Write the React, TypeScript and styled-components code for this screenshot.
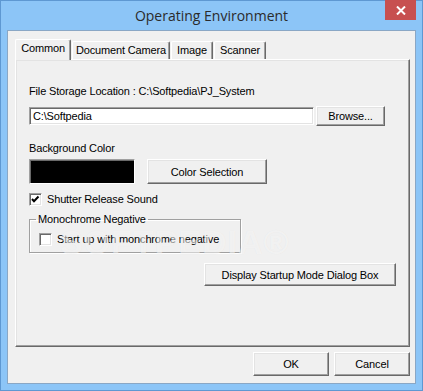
import styled, { createGlobalStyle } from "styled-components"

const Global = createGlobalStyle`
    html, body {
        margin: 0;
        padding: 0;
        background: #8cc5f7;
    }
    * { box-sizing: border-box; }
`

const Window = styled.div`
    width: 423px;
    height: 391px;
    display: flex;
    flex-direction: column;
    background: #8cc5f7;
    border: 1px solid #5e98d2;
    font-family: "Liberation Sans", Arial, sans-serif;
    font-size: 11px;
    letter-spacing: -0.15px;
    color: #000;
`

const TitleBar = styled.div`
    height: 29px;
    display: flex;
    align-items: flex-start;
    flex-shrink: 0;
`

const Title = styled.div`
    flex: 1;
    padding-left: 37px;
    text-align: center;
    font-family: "Open Sans", "Noto Sans", sans-serif;
    font-size: 14px;
    letter-spacing: 0;
    line-height: 29px;
    color: #2b2b2b;
`

const CloseButton = styled.div`
    width: 31px;
    height: 20px;
    margin-top: -1px;
    margin-right: 6px;
    background: #c75050;
    display: flex;
    align-items: center;
    justify-content: center;
`

const Client = styled.div`
    flex: 1;
    margin: 0 6px 6px 6px;
    border: 1px solid #8aa7c5;
    background: #f0f0f0;
    padding: 8px 5px 6px 6px;
    display: flex;
    flex-direction: column;
`

const TabStrip = styled.div`
    height: 20px;
    display: flex;
    align-items: flex-end;
    padding-left: 1px;
    position: relative;
    z-index: 1;
`

const Tab = styled.div<{ $w: number; $active?: boolean }>`
    width: ${p => p.$w}px;
    height: ${p => (p.$active ? 21 : 18)}px;
    margin-bottom: ${p => (p.$active ? -1 : 0)}px;
    margin-right: 1px;
    background: #f0f0f0;
    border-top: 1px solid #fff;
    border-left: 1px solid #fff;
    border-right: 1px solid #696969;
    border-radius: 2px 2px 0 0;
    box-shadow: inset -1px 0 0 #a0a0a0;
    text-align: center;
    line-height: ${p => (p.$active ? 16 : 17)}px;
    white-space: nowrap;
`

const Panel = styled.div`
    position: relative;
    height: 288px;
    margin-left: 1px;
    border-top: 1px solid #fff;
    border-left: 1px solid #fff;
    border-right: 1px solid #696969;
    border-bottom: 1px solid #696969;
    box-shadow: inset -1px -1px 0 #a0a0a0, inset 1px 1px 0 #e3e3e3;
    padding: 25px 13px 0 13px;
    display: flex;
    flex-direction: column;
`

const Label = styled.div<{ $mt?: number }>`
    line-height: 13px;
    margin-top: ${p => p.$mt ?? 0}px;
    white-space: nowrap;
`

const Row = styled.div<{ $mt: number; $gap: number }>`
    display: flex;
    align-items: center;
    margin-top: ${p => p.$mt}px;
    gap: ${p => p.$gap}px;
`

const TextBox = styled.div`
    width: 285px;
    height: 18px;
    background: #fff;
    border-top: 1px solid #a0a0a0;
    border-left: 1px solid #a0a0a0;
    border-right: 1px solid #fff;
    border-bottom: 1px solid #fff;
    box-shadow: inset 1px 1px 0 #696969, inset -1px -1px 0 #e3e3e3;
    padding: 0 3px;
    line-height: 16px;
`

const Button = styled.div<{ $w: number; $h: number }>`
    width: ${p => p.$w}px;
    height: ${p => p.$h}px;
    background: #f0f0f0;
    border-top: 1px solid #fff;
    border-left: 1px solid #fff;
    border-right: 1px solid #696969;
    border-bottom: 1px solid #696969;
    box-shadow: inset -1px -1px 0 #a0a0a0, inset 1px 1px 0 #e3e3e3;
    display: flex;
    align-items: center;
    justify-content: center;
    white-space: nowrap;
`

const Swatch = styled.div`
    width: 106px;
    height: 25px;
    background: #000;
    border-top: 1px solid #a0a0a0;
    border-left: 1px solid #a0a0a0;
    border-right: 1px solid #fff;
    border-bottom: 1px solid #fff;
    box-shadow: inset 1px 1px 0 #696969;
`

const CheckRow = styled.label<{ $mt: number }>`
    display: flex;
    align-items: center;
    gap: 5px;
    height: 13px;
    margin-top: ${p => p.$mt}px;
    line-height: 13px;
`

const CheckBox = styled.span`
    width: 13px;
    height: 13px;
    flex-shrink: 0;
    background: #fff;
    border-top: 1px solid #a0a0a0;
    border-left: 1px solid #a0a0a0;
    border-right: 1px solid #fff;
    border-bottom: 1px solid #fff;
    box-shadow: inset 1px 1px 0 #696969, inset -1px -1px 0 #e3e3e3;
    display: flex;
`

const Group = styled.fieldset`
    width: 212px;
    margin: 7px 0 0 0;
    padding: 7px 0 6px 9px;
    border: 1px solid #a0a0a0;
    box-shadow: inset 1px 1px 0 #fff, 1px 1px 0 #fff;
    min-inline-size: 0;
`

const Legend = styled.legend`
    padding: 0 2px;
    margin-left: -3px;
    line-height: 13px;
`

const Actions = styled.div<{ $mt: number }>`
    display: flex;
    justify-content: flex-end;
    gap: 5px;
    margin-top: ${p => p.$mt}px;
`

const Watermark = styled.div`
    position: absolute;
    left: 44px;
    top: 163px;
    font-family: "Liberation Sans", Arial, sans-serif;
    font-weight: bold;
    font-size: 34px;
    letter-spacing: 1px;
    color: rgba(255, 255, 255, 0.55);
    text-shadow: 0 0 1px rgba(0, 0, 0, 0.06);
    pointer-events: none;
`

function Check({ checked }: { checked?: boolean }) {
    return (
        <CheckBox>
            {checked && (
                <svg width="11" height="11" viewBox="0 0 11 11">
                    <path d="M2 5 L4 7.2 L8.5 2.5" fill="none" stroke="#000" strokeWidth="2" />
                </svg>
            )}
        </CheckBox>
    )
}

export default function App() {
    return (
        <>
            <Global />
            <Window>
                <TitleBar>
                    <Title>Operating Environment</Title>
                    <CloseButton>
                        <svg width="10" height="9" viewBox="0 0 10 9">
                            <path d="M1 0.5 L9 8.5 M9 0.5 L1 8.5" stroke="#fff" strokeWidth="2" />
                        </svg>
                    </CloseButton>
                </TitleBar>
                <Client>
                    <TabStrip>
                        <Tab $w={56} $active>Common</Tab>
                        <Tab $w={98}>Document Camera</Tab>
                        <Tab $w={42}>Image</Tab>
                        <Tab $w={52}>Scanner</Tab>
                    </TabStrip>
                    <Panel>
                        <Label>File Storage Location : C:\Softpedia\PJ_System</Label>
                        <Row $mt={8} $gap={2}>
                            <TextBox>C:\Softpedia</TextBox>
                            <Button $w={69} $h={20}>Browse...</Button>
                        </Row>
                        <Label $mt={16}>Background Color</Label>
                        <Row $mt={4} $gap={12}>
                            <Swatch />
                            <Button $w={120} $h={25}>Color Selection</Button>
                        </Row>
                        <CheckRow $mt={9}>
                            <Check checked />
                            Shutter Release Sound
                        </CheckRow>
                        <Group>
                            <Legend>Monochrome Negative</Legend>
                            <CheckRow $mt={0}>
                                <Check />
                                Start up with monchrome negative
                            </CheckRow>
                        </Group>
                        <Actions $mt={10}>
                            <Button $w={192} $h={23}>Display Startup Mode Dialog Box</Button>
                        </Actions>
                        <Watermark>SOFTPEDIA®</Watermark>
                    </Panel>
                    <Actions $mt={5}>
                        <Button $w={76} $h={24}>OK</Button>
                        <Button $w={76} $h={24}>Cancel</Button>
                    </Actions>
                </Client>
            </Window>
        </>
    )
}
